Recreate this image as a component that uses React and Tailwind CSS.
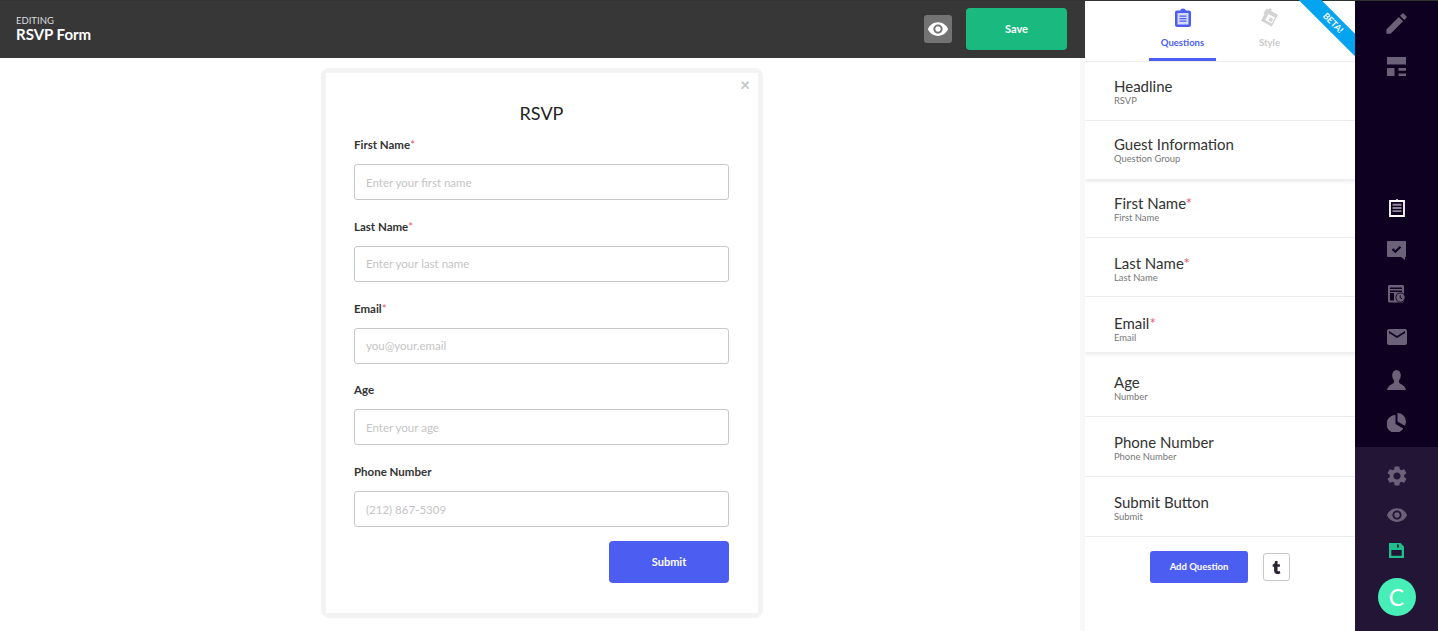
import React from "react";
import { MdEdit, MdEmail, MdSettings, MdVisibility } from "react-icons/md";
import { FaTumblr } from "react-icons/fa";

const fields = [
  { label: "First Name", required: true, placeholder: "Enter your first name" },
  { label: "Last Name", required: true, placeholder: "Enter your last name" },
  { label: "Email", required: true, placeholder: "you@your.email" },
  { label: "Age", placeholder: "Enter your age" },
  { label: "Phone Number", placeholder: "(212) 867-5309" },
];

const questionGroups = [
  {
    shadow: true,
    rows: [
      { title: "Headline", sub: "RSVP", height: "h-[59px] pt-[15px]" },
      { title: "Guest Information", sub: "Question Group", height: "h-[58px] pt-[14px]" },
    ],
  },
  {
    shadow: true,
    rows: [
      { title: "First Name", sub: "First Name", required: true, height: "h-[53px] pt-[9px]" },
      { title: "Last Name", sub: "Last Name", required: true, height: "h-[59px] pt-[16px]" },
      { title: "Email", sub: "Email", required: true, height: "h-[55px] pt-[17px]" },
    ],
  },
  {
    rows: [
      { title: "Age", sub: "Number", height: "h-[59px] pt-[15px]" },
      { title: "Phone Number", sub: "Phone Number", height: "h-[60px] pt-[16px]" },
      { title: "Submit Button", sub: "Submit", height: "h-[60px] pt-[16px]" },
    ],
  },
];

const ClipboardIcon = ({ className }) => (
  <svg viewBox="0 0 16 19" className={className} fill="currentColor">
    <path d="M2 2.500h3.200C5.500 1.200 6.600.4 8 .4s2.500.8 2.800 2.100H14c1.100 0 2 .9 2 2V17c0 1.100-.9 2-2 2H2c-1.100 0-2-.9-2-2V4.500c0-1.100.9-2 2-2z" />
    <path d="M2.500 5h11v11.500h-11z" fill="#d5d9fc" />
    <path d="M4.500 7.500h7v1.300h-7zM4.500 10h7v1.300h-7zM4.500 12.500h7v1.300h-7z" />
  </svg>
);

const SideClipboardIcon = () => (
  <svg viewBox="0 0 16 19" className="w-4 h-[19px]">
    <path d="M1 3h14v15H1z" fill="none" stroke="#fff" strokeWidth="1.800" />
    <path d="M5 3.500V2h2c.2-1.200 1.800-1.200 2 0h2v1.500z" fill="#fff" />
    <path d="M3.500 5.800h9v1.900h-9zM3.500 9h9v1.900h-9zM3.500 12.200h9v1.900h-9z" fill="#8f8799" />
  </svg>
);

const StyleIcon = () => (
  <svg viewBox="0 0 20 20" className="w-5 h-5" fill="#d2d2d2">
    <path d="M6.500 1.500l2.200 1.200 1-1.700 2.300 1.300-1 1.700 7 3.800-6.300 11.700-10.700-5.800 3.600-6.800-1.100-.6zM8.500 7l-3.300 6 6.500 3.500 3.300-6z" />
    <path d="M10 10.500l3 1.600-1.500 2.900-3-1.600z" />
  </svg>
);

const LayoutIcon = () => (
  <svg viewBox="0 0 19 19" className="w-[19px] h-[19px]" fill="currentColor">
    <path d="M0 0h19v7.500H0zM0 11h7.500v8H0zM11.500 11H19v2.700h-7.500zM11.500 16.400H19V19h-7.500z" />
  </svg>
);

const ChatCheckIcon = () => (
  <svg viewBox="0 0 19 19" className="w-[19px] h-[19px]">
    <path d="M1 0h17c.6 0 1 .4 1 1v14c0 .6-.4 1-1 1v3l-4-3H1c-.6 0-1-.4-1-1V1c0-.6.4-1 1-1z" fill="currentColor" />
    <path d="M5.500 8l2.800 2.800 5.200-5" fill="none" stroke="#0e0020" strokeWidth="2.200" />
  </svg>
);

const CalendarClockIcon = () => (
  <svg viewBox="0 0 18 18" className="w-[18px] h-[18px]">
    <path d="M1.500 0h13c.8 0 1.500.7 1.500 1.500V16c0 .8-.7 1.500-1.500 1.500h-13C.7 17.500 0 16.800 0 16V1.500C0 .7.700 0 1.500 0z" fill="currentColor" />
    <path d="M2 2.500h12v1.500H2zM2 5.500h12v1.500H2zM2 8h4v7.500H2z" fill="#0e0020" />
    <circle cx="12.500" cy="12.500" r="5" fill="#0e0020" />
    <circle cx="12.500" cy="12.500" r="4.200" fill="currentColor" />
    <path d="M12.200 10.300v2.500l2 1" fill="none" stroke="#0e0020" strokeWidth="1" />
  </svg>
);

const PersonIcon = () => (
  <svg viewBox="0 0 19 20" className="w-[19px] h-5" fill="currentColor">
    <ellipse cx="9.500" cy="5.500" rx="4.300" ry="5.500" />
    <path d="M6.800 10c.5 1.200.5 2.400-.5 3.200C4.500 14.600 1 15.500 0 20h19c-1-4.500-4.500-5.400-6.300-6.800-1-.8-1-2-.5-3.200z" />
  </svg>
);

const PieIcon = () => (
  <svg viewBox="0 0 19 19" className="w-[19px] h-[19px]" fill="currentColor">
    <path d="M8.500 2v9l7.800 4.500A9 9 0 1 1 8.500 2z" />
    <path d="M10.500 0a8.500 8.500 0 0 1 8.500 8.500c0 1.600-.4 3-1.200 4.300l-7.300-4.300z" />
  </svg>
);

const SaveIcon = () => (
  <svg viewBox="0 0 15 15" className="w-[15px] h-[15px]">
    <path d="M0 0h11.500L15 3.500V15H0z" fill="#20c08e" />
    <path d="M8 1.500h1.800v3H8z" fill="#221535" />
    <path d="M2.300 7h10.400v5.800H2.300z" fill="#221535" />
  </svg>
);

const SideSlot = ({ children, className = "h-[43px]" }) => (
  <div className={`${className} flex items-center justify-center text-[#6b6178]`}>{children}</div>
);

export default function App() {
  return (
    <div className="flex h-screen overflow-hidden bg-white text-[#2a2a2a] font-['Lato','Noto_Sans',sans-serif]">
      <div className="w-[1085px] flex flex-col">
        <header className="h-[58px] shrink-0 flex items-center justify-between bg-[#373737] border-t border-[#2f3331] pb-[1px] pl-4 pr-[18px]">
          <div className="flex flex-col text-white">
            <span className="text-[9.500px] leading-[11px] text-[#dddddd]">EDITING</span>
            <span className="text-[15px] leading-[17px] font-bold">RSVP Form</span>
          </div>
          <div className="flex items-center gap-[14px]">
            <button className="w-7 h-7 rounded-[3px] bg-[#737373] flex items-center justify-center text-white">
              <MdVisibility className="w-[22px] h-[22px]" />
            </button>
            <button className="w-[101px] h-[42px] rounded-[4px] bg-[#1ab980] text-white text-[11px] font-bold">
              Save
            </button>
          </div>
        </header>

        <main className="flex-1 flex justify-center items-start pt-[10px] pl-[4px] border-r-[5px] border-[#f8f8f8]">
          <div className="w-[442px] h-[550px] p-[5px] rounded-lg bg-[#f3f3f3]">
            <form className="relative h-full bg-white pl-7 pr-[29px]">
              <span className="absolute right-[8px] top-[3px] text-[#c4c4c4] text-[17px] font-bold leading-[18px]">×</span>
              <h1 className="text-lg leading-[22px] text-center pt-[29px] text-[#222222]">RSVP</h1>
              <div className="mt-[11px] flex flex-col gap-[9px]">
                {fields.map((f) => (
                  <div key={f.label} className="h-[72.750px] flex flex-col">
                    <label className="h-[19px] text-[11.500px] leading-[19px] font-bold text-[#333333]">
                      {f.label}
                      {f.required && <span className="text-[#e85a6a] font-normal">*</span>}
                    </label>
                    <input
                      placeholder={f.placeholder}
                      className="mt-[10px] w-full h-9 rounded-[3px] border border-[#c8c8c8] px-[11px] text-[11.500px] outline-none placeholder:text-[#c4c4c4]"
                    />
                  </div>
                ))}
              </div>
              <div className="flex justify-end mt-[6px]">
                <button type="button" className="w-[120px] h-[42px] rounded-[4px] bg-[#4c5ef2] text-white text-[11px] font-bold">
                  Submit
                </button>
              </div>
            </form>
          </div>
        </main>
      </div>

      <aside className="relative w-[270px] flex flex-col overflow-hidden">
        <div className="h-[62px] shrink-0 flex pl-[64px] border-b border-[#eeeeee] border-t border-t-[#2f3331]">
          <div className="w-[67px] h-[60px] flex flex-col items-center border-b-[3px] border-[#4c5ef2] text-[#4c5ef2]">
            <ClipboardIcon className="w-4 h-[19px] mt-[7px]" />
            <span className="text-[9.500px] leading-[12px] mt-[10px] font-bold">Questions</span>
          </div>
          <div className="w-[67px] ml-[20px] flex flex-col items-center text-[#c9c9c9]">
            <div className="mt-[6px] h-5"><StyleIcon /></div>
            <span className="text-[9.500px] leading-[12px] mt-[10px] font-bold">Style</span>
          </div>
        </div>

        <div className="absolute right-[-43px] top-[15px] w-[130px] h-[16px] rotate-45 bg-[#04a4f0] flex items-center justify-center">
          <span className="text-white text-[9px] font-bold">BETA!</span>
        </div>

        <div className="flex-1 flex flex-col">
          {questionGroups.map((group, i) => (
            <div
              key={i}
              className={group.shadow ? "mb-[6px] shadow-[0_3px_3px_rgba(0,0,0,0.07)]" : ""}
            >
              {group.rows.map((row, j) => (
                <div
                  key={row.title}
                  className={`${row.height} pl-[29px] flex flex-col ${
                    j < group.rows.length - 1 || !group.shadow ? "border-b border-[#ececec]" : ""
                  }`}
                >
                  <span className="text-[15px] leading-[18px] text-[#333333]">
                    {row.title}
                    {row.required && <span className="text-[#e85a6a]">*</span>}
                  </span>
                  <span className="text-[9.400px] leading-[10px] mt-[1px] text-[#777777]">{row.sub}</span>
                </div>
              ))}
            </div>
          ))}
          <div className="flex items-center pl-[65px] gap-[15px] mt-[14px]">
            <button className="w-[98px] h-[32px] rounded-[3px] bg-[#4c5ef2] text-white text-[9.500px] font-bold">
              Add Question
            </button>
            <button className="w-[27px] h-[28px] rounded-[3px] border border-[#c8c8c8] flex items-center justify-center text-[#2b2233]">
              <FaTumblr className="w-[13px] h-[13px]" />
            </button>
          </div>
        </div>
      </aside>

      <nav className="w-[83px] flex flex-col bg-[#0e0020] border-t border-[#2f3331] pt-[1px]">
        <SideSlot><MdEdit className="w-[27px] h-[27px]" /></SideSlot>
        <SideSlot><LayoutIcon /></SideSlot>
        <div className="h-[98px]" />
        <SideSlot><SideClipboardIcon /></SideSlot>
        <SideSlot><ChatCheckIcon /></SideSlot>
        <SideSlot><CalendarClockIcon /></SideSlot>
        <SideSlot><MdEmail className="w-6 h-6" /></SideSlot>
        <SideSlot><PersonIcon /></SideSlot>
        <SideSlot><PieIcon /></SideSlot>
        <div className="flex-1 mt-[3px] bg-[#221535] flex flex-col items-center">
          <SideSlot className="h-[58px] w-full"><MdSettings className="w-6 h-6" /></SideSlot>
          <SideSlot className="h-[20px] w-full"><MdVisibility className="w-[22px] h-[22px]" /></SideSlot>
          <SideSlot className="h-[50px] w-full"><SaveIcon /></SideSlot>
          <div className="mt-[3px] w-[38px] h-[38px] rounded-full bg-[#48eeb8] flex items-center justify-center text-white text-[23px] leading-none">
            C
          </div>
        </div>
      </nav>
    </div>
  );
}
